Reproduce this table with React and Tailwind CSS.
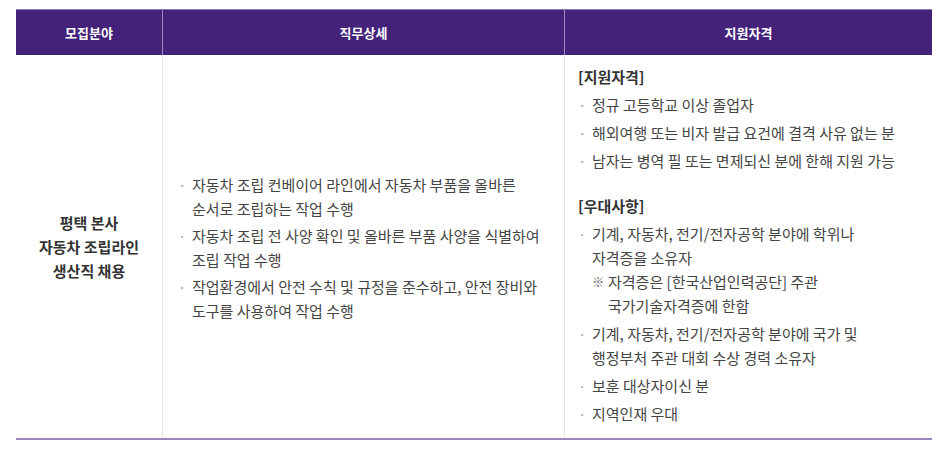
const font = { fontFamily: '"Noto Sans CJK KR", "Noto Sans", sans-serif' };

const duties = [
    ['자동차 조립 컨베이어 라인에서 자동차 부품을 올바른', '순서로 조립하는 작업 수행'],
    ['자동차 조립 전 사양 확인 및 올바른 부품 사양을 식별하여', '조립 작업 수행'],
    ['작업환경에서 안전 수칙 및 규정을 준수하고, 안전 장비와', '도구를 사용하여 작업 수행'],
];

const required = [
    '정규 고등학교 이상 졸업자',
    '해외여행 또는 비자 발급 요건에 결격 사유 없는 분',
    '남자는 병역 필 또는 면제되신 분에 한해 지원 가능',
];

function Bullet({children, className = ''}) {
    return (
        <li className={`flex ${className}`}>
            <span className="w-[14px] shrink-0 text-[#a8a8a8]">·</span>
            <div className="whitespace-nowrap">{children}</div>
        </li>
    )
}

export default function App() {
    return (
        <div className="w-[936px] h-[450px] bg-white pt-[9px] pl-4" style={font}>
            <div className="w-[916px] border-b-2 border-[#9a83c2]">
                <div className="grid grid-cols-[147px_402px_367px] h-[46px] bg-[#45227a] border-t border-[#8f7bb8] text-white text-[13px] font-bold">
                    <div className="flex items-center justify-center border-r border-[#9b8cc0]">모집분야</div>
                    <div className="flex items-center justify-center border-r border-[#9b8cc0]">직무상세</div>
                    <div className="flex items-center justify-center">지원자격</div>
                </div>
                <div className="grid grid-cols-[147px_402px_367px] text-[15px] leading-6 text-[#444]">
                    <div className="flex items-center justify-center border-r border-[#e6e6e6] text-center font-bold text-[#333]">
                        <p>평택 본사<br/>자동차 조립라인<br/>생산직 채용</p>
                    </div>
                    <div className="flex items-center border-r border-[#e6e6e6] pl-[15px] pt-[2px]">
                        <ul className="flex flex-col gap-[3px]">
                            {duties.map((d, i) => (
                                <Bullet key={i}>{d[0]}<br/>{d[1]}</Bullet>
                            ))}
                        </ul>
                    </div>
                    <div className="pl-[13px] pt-[10px] pb-[12px]">
                        <p className="font-bold text-[#333]">[지원자격]</p>
                        <ul className="mt-1 flex flex-col gap-1">
                            {required.map((r, i) => (
                                <Bullet key={i}>{r}</Bullet>
                            ))}
                        </ul>
                        <p className="mt-[21px] font-bold text-[#333]">[우대사항]</p>
                        <ul className="mt-1 flex flex-col gap-1">
                            <Bullet>
                                기계, 자동차, 전기/전자공학 분야에 학위나<br/>자격증을 소유자
                                <div className="flex">
                                    <span className="w-[16px] shrink-0 text-[12px] font-bold text-[#555]">※</span>
                                    <span>자격증은 [한국산업인력공단] 주관<br/>국가기술자격증에 한함</span>
                                </div>
                            </Bullet>
                            <Bullet>기계, 자동차, 전기/전자공학 분야에 국가 및<br/>행정부처 주관 대회 수상 경력 소유자</Bullet>
                            <Bullet>보훈 대상자이신 분</Bullet>
                            <Bullet>지역인재 우대</Bullet>
                        </ul>
                    </div>
                </div>
            </div>
        </div>
    )
}
